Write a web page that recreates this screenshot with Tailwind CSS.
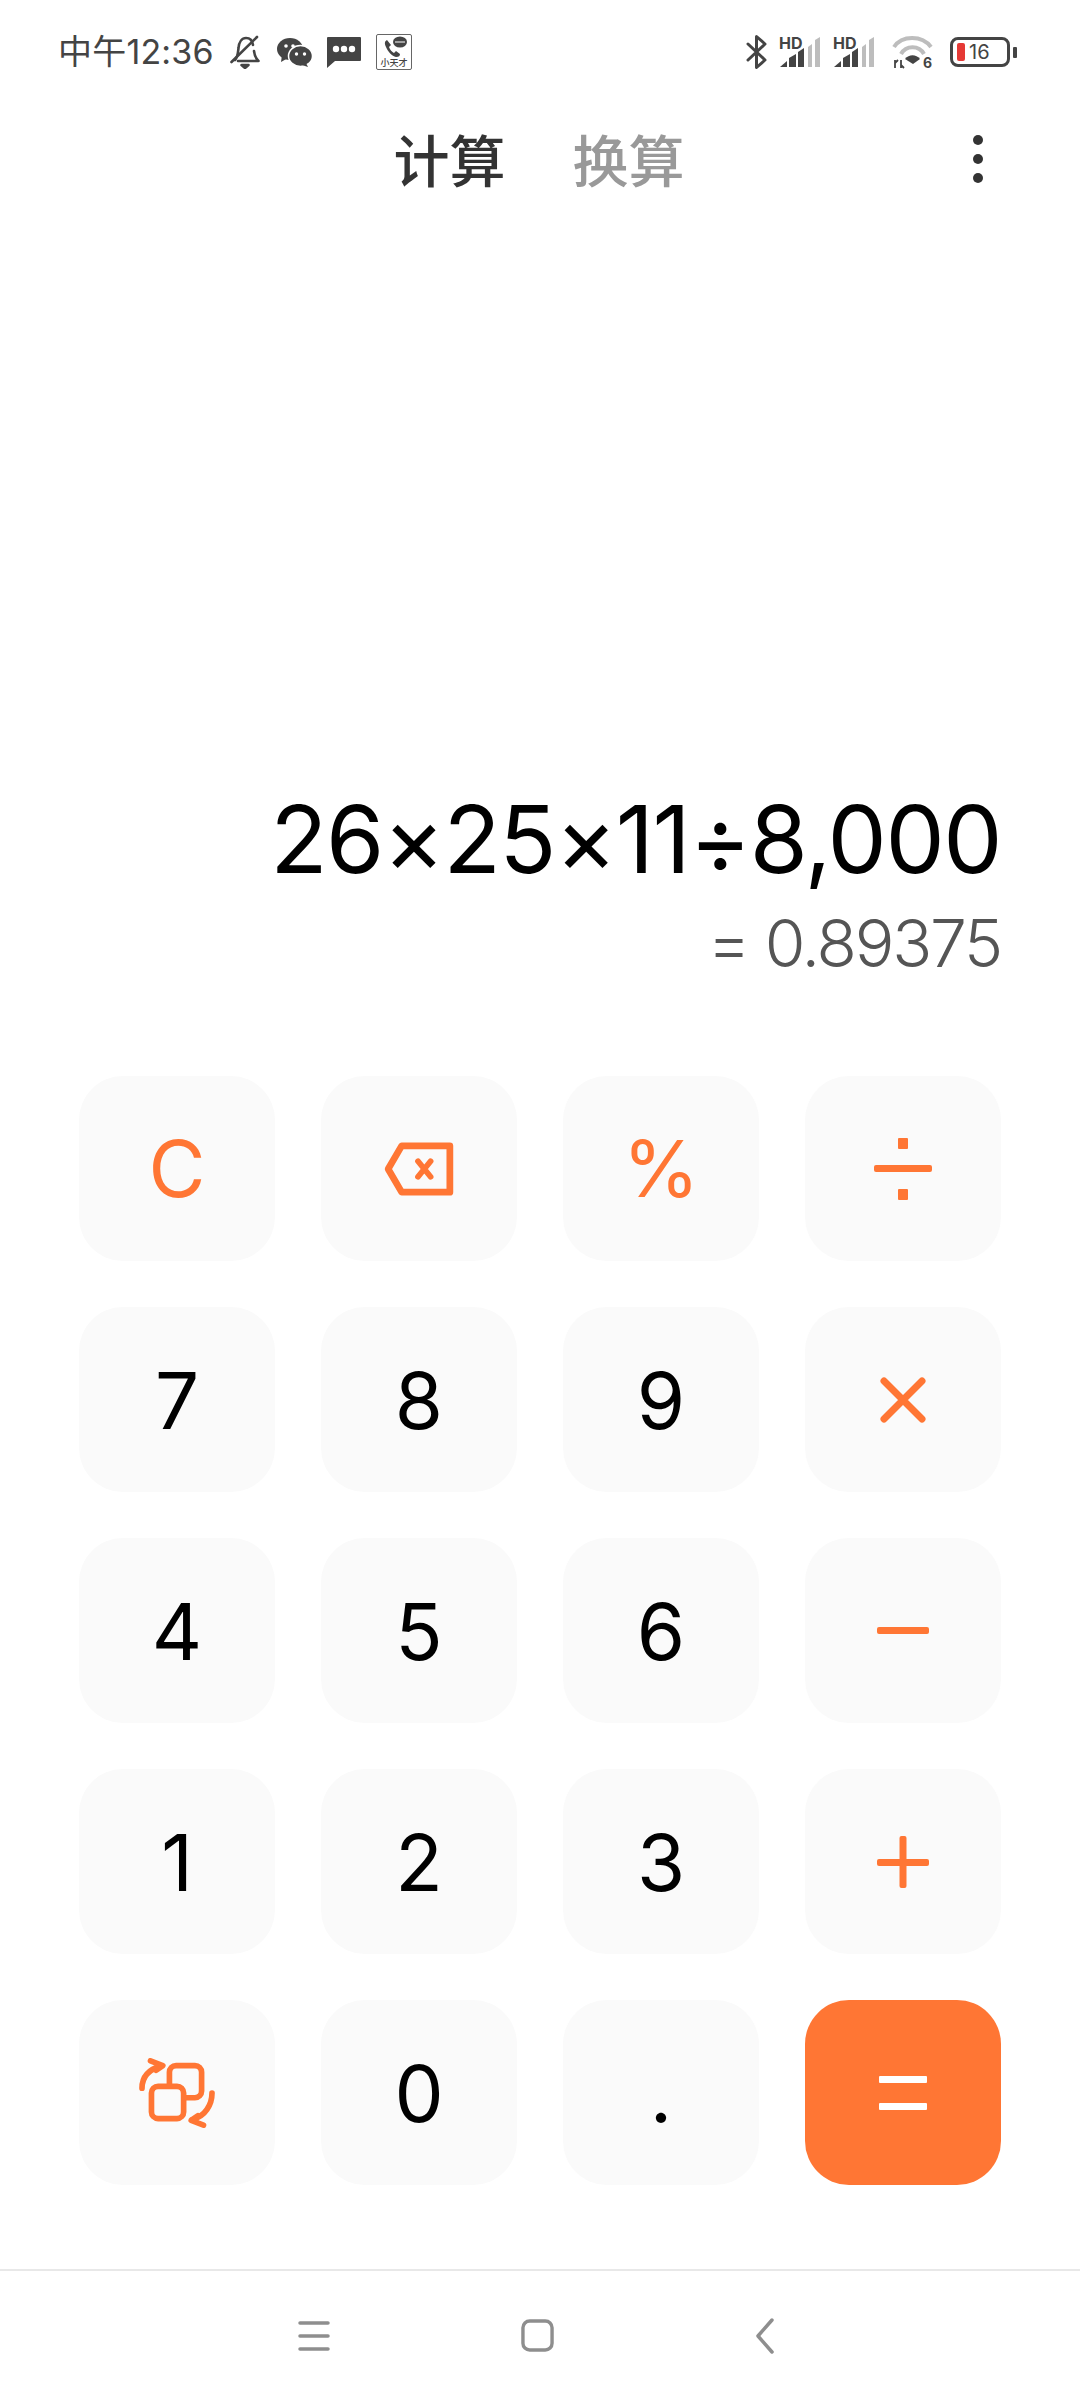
<!DOCTYPE html>
<html lang="zh">
  <head>
    <meta charset="utf-8" />
    <title>计算器</title>
    <script src="https://cdn.jsdelivr.net/npm/@tailwindcss/browser@4"></script>
  </head>
  <body class="bg-white">
    <div class="flex flex-col w-[1080px] h-[2400px] font-['Inter','Noto_Sans_CJK_SC',sans-serif] overflow-hidden">
      <!-- status bar -->
      <div class="flex items-center justify-between h-[104px] pl-[58px] pr-[63px] text-[#444]">
        <div class="flex items-center">
          <span class="text-[34px] leading-none tracking-[0.2px] w-[172px]">中午12:36</span>
          <svg class="w-[30px] h-[34px]" viewBox="0 0 30 34" fill="none" stroke="#444" stroke-width="2.6" stroke-linecap="round" stroke-linejoin="round">
            <path d="M5 25c3-3 3-8 3.500-12C9 7 12 3 16 3c4 0 6.500 3 7 7M24 16c.5 4 1 7 4.500 10H8" />
            <path d="M1.500 27 27 2" />
            <path d="M11.500 30h7l-3.500 3z" fill="#444" />
          </svg>
          <svg class="ml-[17px] w-[35px] h-[29px]" viewBox="0 0 35 29">
            <ellipse cx="13" cy="11" rx="13" ry="11" fill="#444" />
            <path d="M5 17l-1 7 7-4z" fill="#444" />
            <ellipse cx="23.500" cy="18" rx="12" ry="10.500" fill="#444" stroke="#fff" stroke-width="1.500" />
            <path d="M29 25l2 4-6-2z" fill="#444" />
            <circle cx="9" cy="8" r="1.800" fill="#fff" />
            <circle cx="16" cy="8" r="1.800" fill="#fff" />
            <circle cx="19.500" cy="16" r="1.700" fill="#fff" />
            <circle cx="27.500" cy="16" r="1.700" fill="#fff" />
          </svg>
          <svg class="ml-[15px] w-[34px] h-[31px]" viewBox="0 0 34 31">
            <path d="M1 0h32a1 1 0 0 1 1 1v22a1 1 0 0 1-1 1H8l-8 7V1a1 1 0 0 1 1-1z" fill="#444" />
            <circle cx="9" cy="12" r="3.200" fill="#fff" />
            <circle cx="17" cy="12" r="3.200" fill="#fff" />
            <circle cx="25" cy="12" r="3.200" fill="#fff" />
          </svg>
          <div class="relative ml-[15px] w-[36px] h-[36px] border border-[#666] rounded-[2px]">
            <svg class="absolute left-[5px] top-[1px] w-[28px] h-[24px]" viewBox="0 0 28 24" fill="none">
              <path d="M5 4c-2 1-3 3-1 7 2 5 6 9 10 10 3 0 4-1 4-3l-4-3-2 2c-2-1-4-3-5-6l2-2z" fill="#444" />
              <ellipse cx="18" cy="6" rx="7" ry="5.500" fill="#444" />
              <path d="M13 6h10" stroke="#fff" stroke-width="1" />
            </svg>
            <span class="absolute left-0 right-0 bottom-[1px] text-center text-[9px] leading-[10px] font-medium text-[#444]">小天才</span>
          </div>
        </div>
        <div class="flex items-center">
          <svg class="w-[21px] h-[34px]" viewBox="0 0 21 34" fill="none" stroke="#444" stroke-width="3" stroke-linecap="round" stroke-linejoin="round">
            <path d="M2 9l17 16-8.500 7.500v-31L19 9 2 25" />
          </svg>
          <svg class="ml-[12px] -mt-[4px] w-[42px] h-[34px]" viewBox="0 -4 42 34">
            <text x="0" y="12" font-size="16" font-weight="700" fill="#444" font-family="Inter">HD</text>
            <path d="M1 30l7-6v6z" fill="#444" />
            <path d="M10 21l7-4v13h-7z" fill="#444" />
            <path d="M19 15l6-4v19h-6z" fill="#444" />
            <path d="M29 10l4-3v23h-4z" fill="#bdbdbd" />
            <path d="M36 3l5-3v30h-5z" fill="#bdbdbd" />
          </svg>
          <svg class="ml-[12px] -mt-[4px] w-[42px] h-[34px]" viewBox="0 -4 42 34">
            <text x="0" y="12" font-size="16" font-weight="700" fill="#444" font-family="Inter">HD</text>
            <path d="M1 30l7-6v6z" fill="#444" />
            <path d="M10 21l7-4v13h-7z" fill="#444" />
            <path d="M19 15l6-4v19h-6z" fill="#444" />
            <path d="M29 10l4-3v23h-4z" fill="#bdbdbd" />
            <path d="M36 3l5-3v30h-5z" fill="#bdbdbd" />
          </svg>
          <svg class="ml-[17px] -mb-[5px] w-[42px] h-[39px]" viewBox="0 0 42 39" fill="none">
            <path d="M2 12C10 0 30 0 39 12" stroke="#bdbdbd" stroke-width="4" />
            <path d="M9 19C14 10 27 10 32 19" stroke="#bdbdbd" stroke-width="4" />
            <path d="M13 24c4-5 11-5 15 0l-7 5z" fill="#444" />
            <path d="M3 25v8M6 25l-3 3M9 33v-8M12 33l-3-3" stroke="#444" stroke-width="1.800" />
            <text x="31" y="33" font-size="14" font-weight="700" fill="#444" font-family="Inter">6</text>
          </svg>
          <div class="relative ml-[16px] flex items-center w-[60px] h-[30px] border-[3px] border-[#444] rounded-[8px] pl-[4px]">
            <span class="w-[8px] h-[18px] rounded-[2px] bg-[#e53935]"></span>
            <span class="ml-[4px] text-[20px] leading-none font-normal text-[#444]">16</span>
          </div>
          <span class="ml-[3px] w-[4px] h-[11px] rounded-[1px] bg-[#444]"></span>
        </div>
      </div>

      <!-- tabs -->
      <div class="relative flex items-center justify-center h-[112px] pt-[3px] pr-[2px]">
        <span class="text-[56px] leading-none font-medium text-[#333]">计算</span>
        <span class="ml-[67px] text-[56px] leading-none font-medium text-[#999]">换算</span>
        <div class="absolute right-[97px] top-[31px] flex flex-col gap-[9px]">
          <span class="w-[10px] h-[10px] rounded-full bg-[#333]"></span>
          <span class="w-[10px] h-[10px] rounded-full bg-[#333]"></span>
          <span class="w-[10px] h-[10px] rounded-full bg-[#333]"></span>
        </div>
      </div>

      <!-- display -->
      <div class="flex flex-col justify-end flex-1 items-end pr-[79px] pb-[100px]">
        <div class="text-[94px] leading-none text-black tracking-[-1.5px]">26×25×11÷8,000</div>
        <div class="mt-[24px] text-[66px] leading-none font-light text-[#555] tracking-[-2.2px]">= 0.89375</div>
      </div>

      <!-- keypad -->
      <div class="grid grid-cols-4 gap-[46px] px-[79px] text-black text-[78px]">
        <div class="flex items-center justify-center h-[185px] rounded-[44px] bg-[#fafafa] text-[#ff7634]">C</div>
        <div class="flex items-center justify-center h-[185px] rounded-[44px] bg-[#fafafa]">
          <svg class="w-[70px] h-[54px]" viewBox="0 0 72 56" fill="none" stroke="#ff7634" stroke-width="7" stroke-linecap="round" stroke-linejoin="round">
            <path d="M18 4h50v48H18L4 28z" />
            <path d="M35 20l13 16M48 20L35 36" stroke-width="6" />
          </svg>
        </div>
        <div class="flex items-center justify-center h-[185px] rounded-[44px] bg-[#fafafa] text-[#ff7634]">%</div>
        <div class="flex items-center justify-center h-[185px] rounded-[44px] bg-[#fafafa]">
          <svg class="w-[58px] h-[62px]" viewBox="0 0 58 62" fill="#ff7634">
            <rect x="24" y="0" width="10" height="11" rx="1" />
            <rect x="0" y="27" width="58" height="7" rx="2" />
            <rect x="24" y="51" width="10" height="11" rx="1" />
          </svg>
        </div>

        <div class="flex items-center justify-center h-[185px] pt-[2px] rounded-[44px] bg-[#fafafa]">7</div>
        <div class="flex items-center justify-center h-[185px] pt-[2px] rounded-[44px] bg-[#fafafa]">8</div>
        <div class="flex items-center justify-center h-[185px] pt-[2px] rounded-[44px] bg-[#fafafa]">9</div>
        <div class="flex items-center justify-center h-[185px] rounded-[44px] bg-[#fafafa]">
          <svg class="w-[46px] h-[46px]" viewBox="0 0 46 46" stroke="#ff7634" stroke-width="7" stroke-linecap="round">
            <path d="M4 4l38 38M42 4L4 42" />
          </svg>
        </div>

        <div class="flex items-center justify-center h-[185px] pt-[2px] rounded-[44px] bg-[#fafafa]">4</div>
        <div class="flex items-center justify-center h-[185px] pt-[2px] rounded-[44px] bg-[#fafafa]">5</div>
        <div class="flex items-center justify-center h-[185px] pt-[2px] rounded-[44px] bg-[#fafafa]">6</div>
        <div class="flex items-center justify-center h-[185px] rounded-[44px] bg-[#fafafa]">
          <span class="w-[52px] h-[7px] rounded-[2px] bg-[#ff7634]"></span>
        </div>

        <div class="flex items-center justify-center h-[185px] pt-[2px] rounded-[44px] bg-[#fafafa]">1</div>
        <div class="flex items-center justify-center h-[185px] pt-[2px] rounded-[44px] bg-[#fafafa]">2</div>
        <div class="flex items-center justify-center h-[185px] pt-[2px] rounded-[44px] bg-[#fafafa]">3</div>
        <div class="flex items-center justify-center h-[185px] rounded-[44px] bg-[#fafafa]">
          <svg class="w-[52px] h-[52px]" viewBox="0 0 52 52" fill="#ff7634">
            <rect x="0" y="23" width="52" height="7" rx="2" />
            <rect x="22.500" y="0" width="7" height="52" rx="2" />
          </svg>
        </div>

        <div class="flex items-center justify-center h-[185px] rounded-[44px] bg-[#fafafa]">
          <svg class="w-[76px] h-[70px]" viewBox="0 0 80 74" fill="none" stroke="#ff7634" stroke-width="6" stroke-linecap="round" stroke-linejoin="round">
            <rect x="32" y="8" width="34" height="34" rx="7" />
            <rect x="13" y="30" width="34" height="34" rx="7" fill="#fafafa" />
            <path d="M3 32C3 20 10 12 24 8M12 3l13 5-7 5" />
            <path d="M77 37c0 12-7 25-21 28M68 71l-13-5 7-5" />
          </svg>
        </div>
        <div class="flex items-center justify-center h-[185px] pt-[2px] rounded-[44px] bg-[#fafafa]">0</div>
        <div class="flex items-center justify-center h-[185px] rounded-[44px] bg-[#fafafa] pt-[4px]">.</div>
        <div class="flex items-center justify-center h-[185px] rounded-[44px] bg-[#ff7634]">
          <svg class="w-[48px] h-[34px]" viewBox="0 0 48 34" fill="#fff">
            <rect width="48" height="7" rx="1" />
            <rect y="27" width="48" height="7" rx="1" />
          </svg>
        </div>
      </div>

      <!-- nav bar -->
      <div class="flex items-center justify-between mt-[84px] h-[131px] pl-[298px] pr-[305px] border-t-2 border-[#e8e8e8]">
        <svg class="w-[32px] h-[30px]" viewBox="0 0 32 30" stroke="#8e8e8e" stroke-width="3.500" stroke-linecap="round">
          <path d="M2 2h28M2 15h28M2 28h28" />
        </svg>
        <svg class="mr-[10px] w-[33px] h-[33px]" viewBox="0 0 34 34" fill="none" stroke="#8e8e8e" stroke-width="3.500">
          <rect x="2" y="2" width="30" height="30" rx="7" />
        </svg>
        <svg class="w-[20px] h-[36px]" viewBox="0 0 20 36" fill="none" stroke="#8e8e8e" stroke-width="3.500" stroke-linecap="round" stroke-linejoin="round">
          <path d="M17 2L3 18l14 16" />
        </svg>
      </div>
    </div>
  </body>
</html>
